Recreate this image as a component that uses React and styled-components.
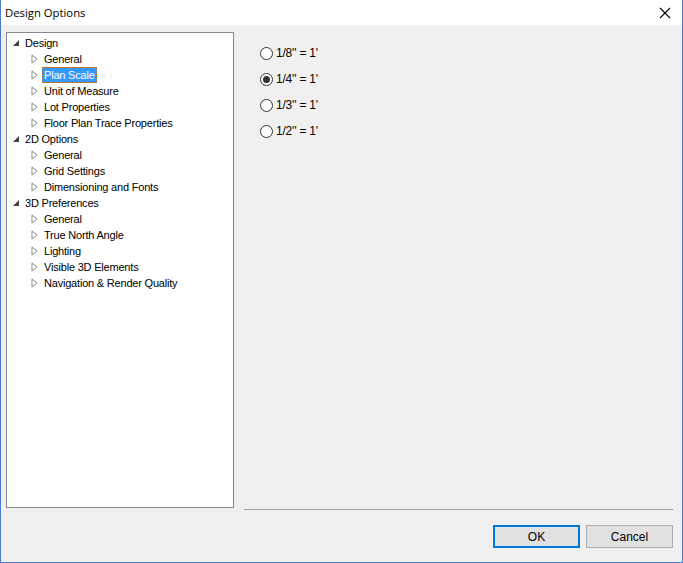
import React from "react";
import styled, { createGlobalStyle } from "styled-components";

const Global = createGlobalStyle`
  html, body { margin: 0; padding: 0; background: #f0f0f0; }
  body { width: 683px; height: 563px; overflow: hidden; }
  * { box-sizing: border-box; }
`;

const Window = styled.div`
  width: 683px;
  height: 563px;
  display: flex;
  flex-direction: column;
  background: #f0f0f0;
  border: 1px solid #4a7bd0;
  border-top: none;
  font-family: "Liberation Sans", Arial, sans-serif;
`;

const TitleBar = styled.div`
  height: 25px;
  background: #ffffff;
  display: flex;
  align-items: center;
  justify-content: space-between;
  padding-left: 4px;
  flex-shrink: 0;
`;

const Title = styled.span`
  font-family: "Open Sans", "Noto Sans", sans-serif;
  font-size: 11.3px;
  color: #000;
  margin-top: -1px;
`;

const CloseBtn = styled.div`
  width: 34px;
  height: 25px;
  display: flex;
  align-items: center;
  justify-content: center;
`;

const Body = styled.div`
  flex: 1;
  display: flex;
  flex-direction: column;
  padding: 7px 9px 12px 5px;
`;

const Main = styled.div`
  display: flex;
  flex: 1;
`;

const TreeBox = styled.div`
  width: 228px;
  height: 476px;
  background: #fff;
  border: 1px solid #828790;
  padding: 2px 0 0 0;
  overflow: hidden;
`;

const Row = styled.div`
  height: 16px;
  display: flex;
  align-items: center;
  padding-left: ${(p) => (p.$level === 0 ? 5 : 24)}px;
  font-size: 11px;
  letter-spacing: -0.2px;
  color: #000;
  white-space: nowrap;
`;

const Arrow = styled.span`
  width: 11px;
  height: 16px;
  display: flex;
  align-items: center;
  justify-content: flex-start;
  flex-shrink: 0;
`;

const Label = styled.span`
  padding: 0 2px;
  height: 16px;
  line-height: 16px;
  background: ${(p) => (p.$selected ? "#3399ff" : "transparent")};
  color: ${(p) => (p.$selected ? "#fff" : "#000")};
  outline: ${(p) => (p.$selected ? "1px dotted #c07020" : "none")};
  outline-offset: -1px;
`;

const Options = styled.div`
  flex: 1;
  display: flex;
  flex-direction: column;
  gap: 10px;
  padding: 13px 0 0 26px;
`;

const RadioRow = styled.label`
  display: flex;
  align-items: center;
  height: 16px;
  font-size: 12px;
  letter-spacing: -0.2px;
  color: #000;
`;

const RadioCircle = styled.span`
  width: 13px;
  height: 13px;
  border-radius: 50%;
  border: 1px solid #333;
  background: #fff;
  display: flex;
  align-items: center;
  justify-content: center;
  margin-right: 3px;
  &::after {
    content: "";
    width: 7px;
    height: 7px;
    border-radius: 50%;
    background: ${(p) => (p.$checked ? "#333" : "transparent")};
  }
`;

const Separator = styled.div`
  height: 1px;
  background: #a0a0a0;
  margin: 0 0 0 238px;
  position: relative;
  top: -1px;
`;

const Footer = styled.div`
  display: flex;
  justify-content: flex-end;
  gap: 6px;
  margin-top: 14px;
  margin-bottom: 2px;
`;

const Button = styled.div`
  width: 87px;
  height: 23px;
  display: flex;
  align-items: center;
  justify-content: center;
  font-size: 12px;
  color: #000;
  background: #e1e1e1;
  border: ${(p) => (p.$default ? "2px solid #0078d7" : "1px solid #adadad")};
`;

const TriFilled = () => (
  <svg width="8" height="8" viewBox="0 0 8 8">
    <polygon points="7,1 7,7 1,7" fill="#404040" />
  </svg>
);

const TriOpen = () => (
  <svg width="7" height="10" viewBox="0 0 7 10">
    <polygon points="1,1 6,5 1,9" fill="none" stroke="#8a8a8a" strokeWidth="1" />
  </svg>
);

const tree = [
  { label: "Design", level: 0 },
  { label: "General", level: 1 },
  { label: "Plan Scale", level: 1, selected: true },
  { label: "Unit of Measure", level: 1 },
  { label: "Lot Properties", level: 1 },
  { label: "Floor Plan Trace Properties", level: 1 },
  { label: "2D Options", level: 0 },
  { label: "General", level: 1 },
  { label: "Grid Settings", level: 1 },
  { label: "Dimensioning and Fonts", level: 1 },
  { label: "3D Preferences", level: 0 },
  { label: "General", level: 1 },
  { label: "True North Angle", level: 1 },
  { label: "Lighting", level: 1 },
  { label: "Visible 3D Elements", level: 1 },
  { label: "Navigation & Render Quality", level: 1 },
];

const scales = [
  { label: "1/8'' = 1'" },
  { label: "1/4'' = 1'", checked: true },
  { label: "1/3'' = 1'" },
  { label: "1/2'' = 1'" },
];

export default function App() {
  return (
    <>
      <Global />
      <Window>
        <TitleBar>
          <Title>Design Options</Title>
          <CloseBtn>
            <svg width="12" height="12" viewBox="0 0 12 12">
              <path d="M1 1 L11 11 M11 1 L1 11" stroke="#000" strokeWidth="1.1" />
            </svg>
          </CloseBtn>
        </TitleBar>
        <Body>
          <Main>
            <TreeBox>
              {tree.map((t, i) => (
                <Row key={i} $level={t.level}>
                  <Arrow>{t.level === 0 ? <TriFilled /> : <TriOpen />}</Arrow>
                  <Label $selected={t.selected}>{t.label}</Label>
                </Row>
              ))}
            </TreeBox>
            <Options>
              {scales.map((s, i) => (
                <RadioRow key={i}>
                  <RadioCircle $checked={s.checked} />
                  {s.label}
                </RadioRow>
              ))}
            </Options>
          </Main>
          <Separator />
          <Footer>
            <Button $default>OK</Button>
            <Button>Cancel</Button>
          </Footer>
        </Body>
      </Window>
    </>
  );
}
